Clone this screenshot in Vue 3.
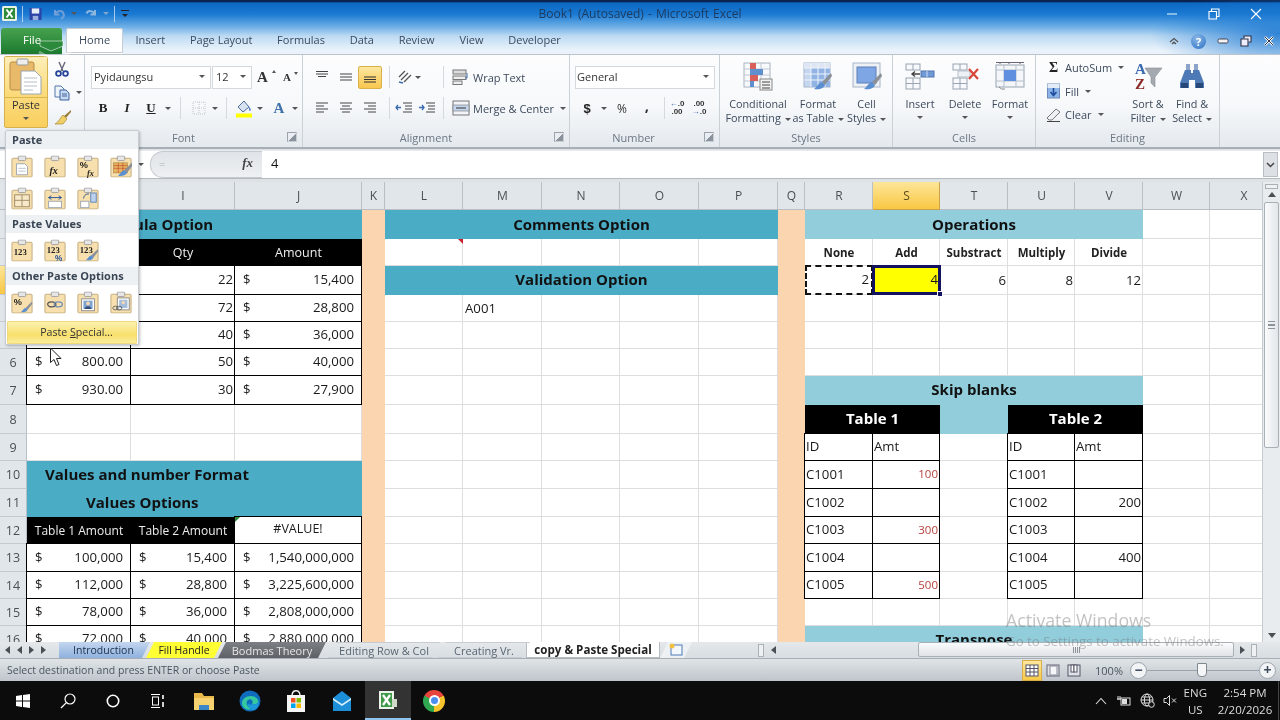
<template>
  <div class="app">
    <svg class="defs" width="0" height="0">
      <defs>
        <symbol id="clip" viewBox="0 0 24 24">
          <rect x="1" y="3" width="22" height="20.5" rx="1" fill="#f7dfae" stroke="#c0a878"/>
          <rect x="8" y="0.5" width="8" height="5" rx="1" fill="#e6e6e6" stroke="#a0a0a0"/>
        </symbol>
        <symbol id="brush" viewBox="0 0 24 24">
          <path d="M22 6 L13 15 L16 18 L23 9Z" fill="#8a8f98"/>
          <path d="M13 15 C9 16 8 20 5 22 C11 23 15 21 16 18Z" fill="#5b8fd0"/>
        </symbol>
      </defs>
    </svg>

    <!-- title area -->
    <header class="top">
      <div class="titlerow">
        <div class="qat">
          <svg class="xl" width="15" height="15" viewBox="0 0 15 15"><rect width="15" height="15" rx="1.5" fill="#e8f2e4"/><rect x="2" y="2" width="11" height="11" fill="#2f8a3c"/><path d="M4.5 3.5 L10.5 11.5 M10.5 3.5 L4.5 11.5" stroke="#fff" stroke-width="2"/></svg>
          <i class="qsep"></i>
          <svg width="13" height="14" viewBox="0 0 14 14"><rect x="0.5" y="0.5" width="13" height="13" rx="1" fill="#2c43a8"/><rect x="3" y="1" width="8" height="5.5" fill="#e8eef8"/><rect x="4" y="9" width="6" height="4.5" fill="#9db0dc"/></svg>
          <svg class="ml10" width="14" height="14" viewBox="0 0 14 14"><path d="M3 3 V7.5 H7.5 M3.5 7 C5 3.5 10 3 11.5 6.5 C12.5 9 11 11 9 12" fill="none" stroke="#6f9fd6" stroke-width="2"/></svg>
          <i class="caret d ml5"></i>
          <svg class="ml7" width="14" height="14" viewBox="0 0 14 14"><path d="M11 3 V7.5 H6.5 M10.5 7 C9 3.5 4 3 2.5 6.5" fill="none" stroke="#8fb6dd" stroke-width="2"/></svg>
          <i class="caret g2 ml5"></i>
          <i class="qsep ml3"></i>
          <span class="cust"></span>
        </div>
        <div class="wtitle">Book1 (Autosaved)&nbsp;-&nbsp;Microsoft Excel</div>
        <div class="wctl">
          <svg width="14" height="14" viewBox="0 0 14 14"><path d="M2 7 H12" stroke="#cfe4f7" stroke-width="1.2"/></svg>
          <svg width="14" height="14" viewBox="0 0 14 14"><path d="M4.5 4.5 V2 H12 V9.5 H9.5 M2 4.5 H9.5 V12 H2Z" fill="none" stroke="#fff" stroke-width="1.1"/></svg>
          <svg width="14" height="14" viewBox="0 0 14 14"><path d="M2 2 L12 12 M12 2 L2 12" stroke="#fff" stroke-width="1.1"/></svg>
        </div>
      </div>
      <div class="tabrow">
        <div class="file">File</div>
        <div class="tab on">Home</div>
        <div class="tab">Insert</div>
        <div class="tab">Page Layout</div>
        <div class="tab">Formulas</div>
        <div class="tab">Data</div>
        <div class="tab">Review</div>
        <div class="tab">View</div>
        <div class="tab">Developer</div>
        <div class="minctl">
          <svg width="12" height="10" viewBox="0 0 12 10"><path d="M2 6 L6 2.5 L10 6 M4 8 L6 6.2 L8 8" fill="none" stroke="#555" stroke-width="1.3"/></svg>
          <span class="help">?</span>
          <svg width="12" height="12" viewBox="0 0 12 12"><rect x="1" y="4" width="10" height="4" rx="1.5" fill="#f2f2f2" stroke="#445"/></svg>
          <svg width="12" height="12" viewBox="0 0 12 12"><path d="M4 3 V1 H11 V7 H9 M1 4 H8 V11 H1Z" fill="#eef" stroke="#334" stroke-width="1.1"/></svg>
          <svg width="12" height="12" viewBox="0 0 12 12"><path d="M2 2 L10 10 M10 2 L2 10" stroke="#fff" stroke-width="2.4"/><path d="M2 2 L10 10 M10 2 L2 10" stroke="#334" stroke-width="1"/></svg>
        </div>
      </div>
    </header>

    <!-- ribbon -->
    <section class="ribbon">
      <div class="grp g-clip">
        <div class="body clipbody">
          <div class="pastebtn">
            <div class="ptop">
              <svg width="34" height="38" viewBox="0 0 34 38"><rect x="1" y="4" width="24" height="28" rx="2" fill="#e8b968" stroke="#b88d48"/><rect x="8" y="1" width="11" height="6" rx="1" fill="#eee" stroke="#999"/><path d="M12 13 H26 L32 19 V36 H12Z" fill="#fff" stroke="#9aa4b0"/><path d="M15 20 H28 M15 24 H28 M15 28 H28 M15 32 H24" stroke="#b7bfc8"/></svg>
            </div>
            <div class="pbot"><span>Paste</span><i class="caret d"></i></div>
          </div>
          <div class="smallcol">
            <div class="sm"><svg width="16" height="16" viewBox="0 0 16 16"><path d="M5 1 L9 10 M11 1 L7 10" stroke="#667" stroke-width="1.4"/><circle cx="4.5" cy="12.5" r="2.4" fill="none" stroke="#25459a" stroke-width="1.8"/><circle cx="11.5" cy="12.5" r="2.4" fill="none" stroke="#25459a" stroke-width="1.8"/></svg></div>
            <div class="sm"><svg width="16" height="16" viewBox="0 0 16 16"><path d="M1 1 H7 L10 4 V12 H1Z" fill="#eef3fa" stroke="#5577aa"/><path d="M6 5 H12 L15 8 V15 H6Z" fill="#c7d9f0" stroke="#3d63a0"/><path d="M8 9 H13 M8 11 H13" stroke="#3d63a0"/></svg><i class="caret d ml6"></i></div>
            <div class="sm"><svg width="18" height="16" viewBox="0 0 18 16"><path d="M17 1 L10 7 L12 9 L17 3Z" fill="#9c7f3a"/><path d="M9 6 L13 10 L9 15 H1 C5 13 6 9 9 6Z" fill="#f0cf68" stroke="#a88a30" stroke-width=".7"/></svg></div>
          </div>
        </div>
        <div class="lbl">Clipboard</div>
      </div>

      <div class="grp g-font">
        <div class="body col">
          <div class="rrow">
            <div class="combo w120"><span>Pyidaungsu</span><i class="caret d"></i></div>
            <div class="combo w40"><span>12</span><i class="caret d"></i></div>
            <span class="bigA ml5">A<i class="mini up"></i></span>
            <span class="smA">A<i class="mini dn"></i></span>
          </div>
          <div class="rrow">
            <span class="ic i24 fb">B</span>
            <span class="ic i24 fi">I</span>
            <span class="ic i24 fu">U</span>
            <span class="cw"><i class="caret d"></i></span>
            <i class="vsep m7"></i>
            <span class="ic i22"><svg width="14" height="14" viewBox="0 0 14 14"><rect x="1" y="1" width="12" height="12" fill="none" stroke="#c2c7cd" stroke-dasharray="1 1"/><path d="M7 1 V13 M1 7 H13" stroke="#c2c7cd" stroke-dasharray="1 1"/></svg></span>
            <span class="cw"><i class="caret d"></i></span>
            <i class="vsep m6"></i>
            <span class="ic i22"><svg width="18" height="20" viewBox="0 0 18 20"><path d="M3 9 L9 3 L14 9 L8 14Z" fill="#d8e3f2" stroke="#4e6c97"/><path d="M14 9 C16 10 16 13 15 13 C14 13 14 11 14 9Z" fill="#4277bf"/><rect x="1" y="15.5" width="16" height="4" fill="#ffff00"/></svg></span>
            <span class="cw"><i class="caret d"></i></span>
            <span class="ic i22 ml3 colorA">A</span>
            <span class="cw"><i class="caret d"></i></span>
          </div>
        </div>
        <div class="lbl off20">Font<i class="launch"></i></div>
      </div>

      <div class="grp g-align">
        <div class="body col">
          <div class="rrow">
            <span class="ic i24"><svg width="16" height="14" viewBox="0 0 16 14"><path d="M2 1.5 H14 M2 4 H14 M4 6.5 H12" stroke="#444" stroke-width="1.2"/></svg></span>
            <span class="ic i24"><svg width="16" height="14" viewBox="0 0 16 14"><path d="M2 4 H14 M2 7 H14 M2 10 H14" stroke="#444" stroke-width="1.2"/></svg></span>
            <span class="ic i24 hot"><svg width="16" height="14" viewBox="0 0 16 14"><path d="M2 7 H14 M2 9.5 H14 M2 12 H14" stroke="#333" stroke-width="1.2"/></svg></span>
            <i class="vsep m7"></i>
            <span class="ic i16"><svg width="16" height="16" viewBox="0 0 16 16"><path d="M2 8 L8 2 M4 11 L11 4 M7 13 L14 6" stroke="#555" stroke-width="1.3"/><path d="M2 13 L6 14" stroke="#3a6bb0" stroke-width="1.5"/></svg></span>
            <span class="cw"><i class="caret d"></i></span>
            <i class="vsep m20"></i>
            <svg class="ml8" width="18" height="16" viewBox="0 0 18 16"><rect x="1" y="1" width="13" height="4" fill="#ddd" stroke="#777"/><rect x="1" y="7" width="13" height="3.5" fill="#eee" stroke="#777"/><rect x="1" y="12" width="9" height="3.5" fill="#eee" stroke="#777"/><path d="M15 4 V9 H13" fill="none" stroke="#3a6bb0"/></svg>
            <span class="alabel">Wrap Text</span>
          </div>
          <div class="rrow">
            <span class="ic i24"><svg width="16" height="14" viewBox="0 0 16 14"><path d="M2 2 H14 M2 5 H10 M2 8 H14 M2 11 H10" stroke="#444" stroke-width="1.2"/></svg></span>
            <span class="ic i24"><svg width="16" height="14" viewBox="0 0 16 14"><path d="M2 2 H14 M4 5 H12 M2 8 H14 M4 11 H12" stroke="#444" stroke-width="1.2"/></svg></span>
            <span class="ic i24"><svg width="16" height="14" viewBox="0 0 16 14"><path d="M2 2 H14 M6 5 H14 M2 8 H14 M6 11 H14" stroke="#444" stroke-width="1.2"/></svg></span>
            <i class="vsep m4"></i>
            <span class="ic i22"><svg width="18" height="14" viewBox="0 0 18 14"><path d="M8 2 H17 M10 5 H17 M10 8 H17 M8 11 H17" stroke="#444"/><path d="M1 6.5 H6 M3 4 L1 6.5 L3 9" fill="none" stroke="#3a6bb0" stroke-width="1.3"/></svg></span>
            <span class="ic i22 ml1"><svg width="18" height="14" viewBox="0 0 18 14"><path d="M8 2 H17 M10 5 H17 M10 8 H17 M8 11 H17" stroke="#444"/><path d="M1 6.5 H6 M4 4 L6 6.5 L4 9" fill="none" stroke="#3a6bb0" stroke-width="1.3"/></svg></span>
            <i class="vsep m5"></i>
            <svg class="ml8" width="18" height="16" viewBox="0 0 18 16"><rect x="1" y="1" width="16" height="14" fill="#f2f4f7" stroke="#777"/><rect x="1" y="5" width="16" height="6" fill="#c3d5ec" stroke="#777" stroke-width=".6"/><path d="M4 8 H14" stroke="#333"/></svg>
            <span class="alabel">Merge &amp; Center</span>
            <i class="caret d ml6"></i>
          </div>
        </div>
        <div class="lbl off20">Alignment<i class="launch"></i></div>
      </div>

      <div class="grp g-num">
        <div class="body col">
          <div class="rrow">
            <div class="combo w140"><span>General</span><i class="caret d"></i></div>
          </div>
          <div class="rrow">
            <span class="ic i24 fdollar">$</span>
            <span class="cw"><i class="caret d"></i></span>
            <span class="ic i24 ml1 fpct">%</span>
            <span class="ic i24 ml1 fcomma">,</span>
            <i class="vsep m5"></i>
            <span class="ic i22 ml1 fdec"><b class="bluearrow">←</b>.0<br/>.00</span>
            <span class="ic i22 fdec">.00<br/><b class="bluearrow">→</b>.0</span>
          </div>
        </div>
        <div class="lbl off22">Number<i class="launch"></i></div>
      </div>

      <div class="grp g-styles">
        <div class="body">
          <div class="big b76">
            <svg width="30" height="30" viewBox="0 0 30 30"><rect x="1" y="2" width="26" height="24" fill="#f7f9fc" stroke="#aab4c0"/><path d="M1 8 H27 M1 14 H27 M1 20 H27 M9 2 V26 M18 2 V26" stroke="#c0c8d2"/><rect x="7" y="2" width="6" height="6" fill="#d9605a"/><rect x="7" y="8" width="13" height="6" fill="#5f8fcf"/><rect x="7" y="14" width="8" height="6" fill="#d9605a"/><rect x="7" y="20" width="4" height="6" fill="#5f8fcf"/><rect x="17" y="18" width="12" height="11" fill="#f2f2f2" stroke="#888"/><path d="M19 21 H27 M19 24 H27 M19 27 H27" stroke="#444"/></svg>
            <span>Conditional</span><span>Formatting <i class="caret d"></i></span>
          </div>
          <div class="big b42">
            <svg width="30" height="30" viewBox="0 0 30 30"><rect x="1" y="2" width="26" height="24" fill="#c5d7f0" stroke="#a6b5c8"/><rect x="1" y="2" width="26" height="5" fill="#dde6f2"/><rect x="8" y="7" width="19" height="19" fill="#92b4e4"/><path d="M1 7 H27 M1 13 H27 M1 19 H27 M8 2 V26 M15 2 V26 M22 2 V26" stroke="#eef3fa"/><use href="#brush" x="6" y="6" width="24" height="24"/></svg>
            <span>Format</span><span>as Table <i class="caret d"></i></span>
          </div>
          <div class="big b53">
            <svg width="30" height="30" viewBox="0 0 30 30"><rect x="1" y="2" width="27" height="24" fill="#edf1f6" stroke="#a6b5c8"/><rect x="5" y="6" width="19" height="16" fill="#7ea6e4" stroke="#5f7fb8"/><use href="#brush" x="7" y="6" width="24" height="24"/></svg>
            <span>Cell</span><span>Styles <i class="caret d"></i></span>
          </div>
        </div>
        <div class="lbl">Styles</div>
      </div>

      <div class="grp g-cells">
        <div class="body">
          <div class="big b54">
            <svg width="30" height="30" viewBox="0 0 30 30"><rect x="1" y="3" width="14" height="6" fill="#f7f9fc" stroke="#9aa4b0"/><path d="M8 3 V9" stroke="#9aa4b0"/><rect x="1" y="17" width="14" height="11" fill="#f7f9fc" stroke="#9aa4b0"/><path d="M8 17 V28 M1 22.5 H15" stroke="#9aa4b0"/><rect x="16" y="10" width="13" height="6" fill="#6f9ad6" stroke="#4f74b0"/><path d="M22 10 V16" stroke="#cfe0f5"/><path d="M7 13 H15 M10 10.5 L7 13 L10 15.5" fill="none" stroke="#444" stroke-width="1.4"/></svg>
            <span>Insert</span><i class="caret d mt5"></i>
          </div>
          <div class="big b36">
            <svg width="30" height="30" viewBox="0 0 30 30"><rect x="3" y="3" width="14" height="6" fill="#f7f9fc" stroke="#9aa4b0"/><path d="M10 3 V9" stroke="#9aa4b0"/><rect x="3" y="17" width="14" height="11" fill="#f7f9fc" stroke="#9aa4b0"/><path d="M10 17 V28 M3 22.5 H17" stroke="#9aa4b0"/><rect x="8" y="10" width="12" height="6" fill="#eef2f7" stroke="#b5bfcc"/><path d="M19 8 L28 18 M28 8 L19 18" stroke="#d9463a" stroke-width="2.2"/></svg>
            <span>Delete</span><i class="caret d mt5"></i>
          </div>
          <div class="big b54">
            <svg width="30" height="30" viewBox="0 0 30 30"><path d="M1 1.5 H29 M5 1 V3 M14 1 V3 M25 1 V3" stroke="#667"/><rect x="1" y="4" width="28" height="22" fill="#f4f6f9" stroke="#9aa4b0"/><path d="M1 9 H29 M1 20 H29 M9 4 V26 M21 4 V26" stroke="#b5bfcc"/><rect x="9" y="9" width="12" height="11" fill="#5f8fde"/><path d="M4 26 Q6 29 10 28" fill="none" stroke="#888"/></svg>
            <span>Format</span><i class="caret d mt5"></i>
          </div>
        </div>
        <div class="lbl">Cells</div>
      </div>

      <div class="grp g-edit">
        <div class="body">
          <div class="editcol">
            <div class="erow"><span class="sigma">Σ</span><span>AutoSum</span><i class="caret d ml6"></i></div>
            <div class="erow"><svg class="eicon" width="14" height="16" viewBox="0 0 14 16"><rect x="1" y="1" width="12" height="14" fill="#8cb3e8" stroke="#6d8ab5"/><rect x="1" y="1" width="12" height="4" fill="#e3ebf6"/><path d="M7 5 V12 M4 9 L7 12.5 L10 9" fill="none" stroke="#1d4c9c" stroke-width="1.6"/></svg><span>Fill</span><i class="caret d ml6"></i></div>
            <div class="erow"><svg class="eicon" width="15" height="14" viewBox="0 0 15 14"><path d="M10 1 L14 4 L6 12 H3 L1 10Z" fill="#eef1f4" stroke="#777"/><path d="M1 13.5 H14" stroke="#444"/></svg><span>Clear</span><i class="caret d ml6"></i></div>
          </div>
          <div class="big b44">
            <svg width="30" height="30" viewBox="0 0 30 30"><text x="2" y="13" class="az blue2">A</text><text x="2" y="28" class="az red2">Z</text><path d="M12 7 H29 L22 16 V26 L18 22 V16Z" fill="#a5aab0" stroke="#8a8f96" stroke-width=".6"/></svg>
            <span>Sort &amp;</span><span>Filter <i class="caret d"></i></span>
          </div>
          <div class="big b44">
            <svg width="30" height="30" viewBox="0 0 30 30"><rect x="9" y="3" width="4" height="7" fill="#8aa5c9"/><rect x="17" y="3" width="4" height="7" fill="#8aa5c9"/><path d="M8 9 H14 V12 H16 V9 H22 L27 22 V27 H18 V19 H12 V27 H3 V22Z" fill="#4d7ab5"/><rect x="4" y="22" width="7" height="5" fill="#29487a"/><rect x="19" y="22" width="7" height="5" fill="#29487a"/></svg>
            <span>Find &amp;</span><span>Select <i class="caret d"></i></span>
          </div>
        </div>
        <div class="lbl">Editing</div>
      </div>
    </section>
    <div class="ribline"></div>

    <!-- formula bar -->
    <div class="fbar">
      <div class="namebox"><i class="caret d"></i></div>
      <div class="pill"><span class="eq">=</span><span class="fx">fx</span></div>
      <div class="finput">4</div>
      <div class="fexp"><svg width="9" height="6" viewBox="0 0 9 6"><path d="M1 1 L4.5 4.5 L8 1" fill="none" stroke="#444" stroke-width="1.5"/></svg></div>
    </div>

    <!-- sheet -->
    <div class="sheetwrap">
      <div class="grid">
        <div class="corner"></div>
        <div v-for="(c, i) in colNames" :key="c" class="ch" :class="{ active: c === 'S' }" :style="{ gridColumn: i + 2, gridRow: 1 }">{{ c }}</div>
        <div v-for="r in 16" :key="'r' + r" class="rh" :class="{ active: r === 3 }" :style="{ gridColumn: 1, gridRow: r + 1 }">{{ r }}</div>
        <template v-for="r in 16" :key="'row' + r">
          <div v-for="(c, i) in colNames" :key="c + r" class="g" :style="{ gridColumn: i + 2, gridRow: r + 1 }"></div>
        </template>
        <div v-for="(x, i) in cells" :key="i" class="cell" :class="x.cls" :style="{ gridColumn: x.col + ' / span ' + x.span, gridRow: x.row }">
          <template v-if="x.money"><span>$</span><span>{{ x.money }}</span></template>
          <template v-else>{{ x.text }}</template>
        </div>
      </div>
      <div class="vscroll">
        <div class="vsplit"></div>
        <i class="arrow up"></i>
        <div class="vtrack"><div class="vthumb"><span class="grip"></span></div></div>
        <i class="arrow down"></i>
      </div>
    </div>

    <!-- sheet tabs -->
    <div class="sheetbar">
      <div class="nav">
        <i class="tri l bar"></i><i class="tri l"></i><i class="tri r"></i><i class="tri r bar"></i>
      </div>
      <div class="stabs">
        <div class="st tblue">Introduction</div>
        <div class="st yellow">Fill Handle</div>
        <div class="st dark">Bodmas Theory</div>
        <div class="st plain">Editing Row &amp; Col</div>
        <div class="st plain">Creating Vr.</div>
        <div class="st act">copy &amp; Paste Special</div>
        <div class="st newt"><svg width="16" height="14" viewBox="0 0 16 14"><rect x="3" y="2" width="11" height="10" fill="#f4f7fb" stroke="#4a7ab8"/><circle cx="4" cy="3" r="2.5" fill="#f0c040"/></svg></div>
      </div>
      <div class="hsplit"></div>
      <i class="tri l hl"></i>
      <div class="htrack"><div class="hthumb"><span class="hgrip"></span></div></div>
      <i class="tri r"></i>
      <div class="hsplit last"></div>
    </div>

    <!-- status bar -->
    <footer class="status">
      <span class="stxt">Select destination and press ENTER or choose Paste</span>
      <div class="sright">
        <span class="vw on"><svg width="14" height="13" viewBox="0 0 14 13"><rect x="1" y="1" width="12" height="11" fill="#fff" stroke="#556"/><path d="M1 4.5 H13 M1 8 H13 M5 1 V12 M9 1 V12" stroke="#556"/></svg></span>
        <span class="vw"><svg width="14" height="13" viewBox="0 0 14 13"><rect x="1" y="1" width="12" height="11" fill="#dfe3e7" stroke="#667"/><rect x="4" y="2" width="7" height="9" fill="#f5f6f7" stroke="#889"/></svg></span>
        <span class="vw"><svg width="14" height="13" viewBox="0 0 14 13"><rect x="1" y="1" width="12" height="11" fill="#dfe3e7" stroke="#556"/><rect x="4" y="1" width="3" height="7" fill="#fff" stroke="#556"/><rect x="7" y="1" width="3" height="7" fill="#fff" stroke="#556"/></svg></span>
        <span class="pct">100%</span>
        <span class="zbtn">−</span>
        <div class="slider"><i class="sthumb"></i></div>
        <span class="zbtn">+</span>
      </div>
    </footer>

    <!-- taskbar -->
    <footer class="taskbar">
      <div class="ti t45"><svg width="16" height="16" viewBox="0 0 16 16"><path d="M1 3 L7 2 V7.5 H1Z M8 2 L15 1 V7.5 H8Z M1 8.5 H7 V14 L1 13Z M8 8.5 H15 V15 L8 14Z" fill="#fff"/></svg></div>
      <div class="ti t45"><svg width="16" height="16" viewBox="0 0 16 16"><circle cx="10" cy="6" r="5" fill="none" stroke="#fff" stroke-width="1.2"/><path d="M6.4 9.6 L1 15" stroke="#fff" stroke-width="1.3"/></svg></div>
      <div class="ti t45"><svg width="14" height="14" viewBox="0 0 14 14"><circle cx="7" cy="7" r="5.7" fill="none" stroke="#fff" stroke-width="1.6"/></svg></div>
      <div class="ti t45"><svg width="16" height="16" viewBox="0 0 16 16"><path d="M1 1.5 H10 M1 14.5 H10" stroke="#fff"/><rect x="2.5" y="4" width="6" height="8" fill="none" stroke="#fff"/><path d="M13 2 V6 M13 9 V14" stroke="#fff" stroke-width="1.6"/></svg></div>
      <div class="ti t46 first"><svg width="22" height="20" viewBox="0 0 22 20"><path d="M1 2 H9 L11 5 H21 V19 H1Z" fill="#e9b84a"/><rect x="1" y="7" width="20" height="12" fill="#f5d16f"/><rect x="6" y="14" width="10" height="5" fill="#3a86c8"/></svg></div>
      <div class="ti t46"><svg width="22" height="22" viewBox="0 0 22 22"><circle cx="11" cy="11" r="10.5" fill="#0f6cbd"/><path d="M3 13 C3 6 15 3 19 10 C20 13 17 15 13 14 C15 11 12 8 9 10 C6 12 8 18 13 19 C8 21 3 18 3 13Z" fill="#36c9a0"/><path d="M13 14 C17 15 20 13 19 10 C21 14 19 18 15 20 C11 20 8 17 9 13 C10 15 11 15 13 14Z" fill="#1d9bd8"/></svg></div>
      <div class="ti t46"><svg width="20" height="24" viewBox="0 0 20 24"><path d="M6 7 C6 0 14 0 14 7" fill="none" stroke="#eee" stroke-width="1.4"/><rect x="1" y="6" width="18" height="17" fill="#f5f5f5"/><rect x="5" y="9" width="4.5" height="4.5" fill="#f25022"/><rect x="10.5" y="9" width="4.5" height="4.5" fill="#7fba00"/><rect x="5" y="14.5" width="4.5" height="4.5" fill="#00a4ef"/><rect x="10.5" y="14.5" width="4.5" height="4.5" fill="#ffb900"/></svg></div>
      <div class="ti t46"><svg width="20" height="22" viewBox="0 0 20 22"><path d="M1 8 L10 1 L19 8 V21 H1Z" fill="#1d8fd8"/><path d="M1 8 L10 14 L19 8 V10 L10 16 L1 10Z" fill="#d8effc"/></svg></div>
      <div class="ti t46 activeapp"><svg width="20" height="20" viewBox="0 0 20 20"><rect x="1" y="1" width="15" height="18" fill="#eef5ea"/><rect x="3" y="3" width="11" height="14" fill="#3f9b4a"/><path d="M5 5 L12 15 M12 5 L5 15" stroke="#fff" stroke-width="2.2"/><rect x="14" y="9" width="5" height="8" fill="#cfd8c9"/></svg></div>
      <div class="ti t46"><span class="chrome"><i></i></span></div>
      <div class="tray">
        <svg width="12" height="8" viewBox="0 0 12 8"><path d="M1 7 L6 1.5 L11 7" fill="none" stroke="#ddd" stroke-width="1.1"/></svg>
        <svg class="ml10" width="14" height="12" viewBox="0 0 14 12"><rect x="4" y="3" width="9" height="7" fill="none" stroke="#ddd"/><rect x="5" y="4" width="5" height="5" fill="#ddd"/><path d="M1 1 V5 M3 1 V5 M0 4 H4" stroke="#ddd"/></svg>
        <svg class="ml9" width="15" height="15" viewBox="0 0 15 15"><circle cx="7" cy="7" r="6" fill="none" stroke="#ddd"/><ellipse cx="7" cy="7" rx="2.6" ry="6" fill="none" stroke="#ddd"/><path d="M1 7 H13 M2 4 H12 M2 10 H12" stroke="#ddd"/><circle cx="11.5" cy="11.5" r="2.8" fill="#111" stroke="#ddd"/></svg>
        <svg class="ml8" width="14" height="13" viewBox="0 0 14 13"><path d="M1 4.5 H3.5 L6.5 1.5 V11.5 L3.5 8.5 H1Z" fill="none" stroke="#ddd"/><path d="M9 4.5 L13 8.5 M13 4.5 L9 8.5" stroke="#ddd"/></svg>
        <div class="lang"><span>ENG</span><span>US</span></div>
        <div class="clock"><span>2:54 PM</span><span>2/20/2026</span></div>
        <i class="showd"></i>
      </div>
    </footer>

    <!-- paste gallery menu -->
    <div class="menu">
      <div class="mh">Paste</div>
      <div class="irow">
        <svg class="pi" viewBox="0 0 24 24"><use href="#clip"/><path d="M6 9 H15 L18 12 V21 H6Z" fill="#fff" stroke="#9aa4b0"/><path d="M8 14 H16 M8 17 H16" stroke="#b7bfc8"/></svg>
        <svg class="pi" viewBox="0 0 24 24"><use href="#clip"/><text x="6" y="20" class="pfx">fx</text></svg>
        <svg class="pi" viewBox="0 0 24 24"><use href="#clip"/><text x="3" y="14" class="ppct">%</text><text x="11" y="22" class="pfx s">fx</text></svg>
        <svg class="pi" viewBox="0 0 24 24"><use href="#clip"/><rect x="4" y="8" width="15" height="11" fill="#e5b25e" stroke="#9d7a3a" stroke-width=".6"/><path d="M4 11 H19 M4 14 H19 M9 8 V19 M14 8 V19" stroke="#c0392b" stroke-width=".6"/><use href="#brush" x="4" y="2" width="22" height="22"/></svg>
      </div>
      <div class="irow r2">
        <svg class="pi" viewBox="0 0 24 24"><use href="#clip"/><rect x="4" y="8" width="16" height="13" fill="#f8e9c9" stroke="#9d8a66"/><path d="M12 8 V21 M4 14 H20" stroke="#9d8a66"/></svg>
        <svg class="pi" viewBox="0 0 24 24"><use href="#clip"/><path d="M5 11 H19 M5 11 L8 9 M5 11 L8 13 M19 11 L16 9 M19 11 L16 13" fill="none" stroke="#1f4f99" stroke-width="1"/><rect x="5" y="15" width="14" height="7" fill="#fff" stroke="#9aa4b0"/></svg>
        <svg class="pi" viewBox="0 0 24 24"><use href="#clip"/><rect x="4" y="15" width="9" height="7" fill="#fff" stroke="#9aa4b0"/><rect x="15" y="6" width="6" height="10" fill="#bcd2ee" stroke="#5d83b8"/><path d="M7 12 C8 8 10 7 13 7" fill="none" stroke="#1f4f99"/></svg>
      </div>
      <div class="mh h2">Paste Values</div>
      <div class="irow r3">
        <svg class="pi" viewBox="0 0 24 24"><use href="#clip"/><text x="3" y="17" class="p123">123</text></svg>
        <svg class="pi" viewBox="0 0 24 24"><use href="#clip"/><text x="3" y="15" class="p123">123</text><text x="12" y="23" class="ppct s">%</text></svg>
        <svg class="pi" viewBox="0 0 24 24"><use href="#clip"/><text x="3" y="15" class="p123">123</text><use href="#brush" x="6" y="6" width="18" height="18"/></svg>
      </div>
      <div class="mh h3">Other Paste Options</div>
      <div class="irow r4">
        <svg class="pi" viewBox="0 0 24 24"><use href="#clip"/><text x="3" y="15" class="ppct">%</text><use href="#brush" x="7" y="7" width="17" height="17"/></svg>
        <svg class="pi" viewBox="0 0 24 24"><use href="#clip"/><ellipse cx="8.5" cy="14" rx="4.5" ry="2.8" fill="none" stroke="#555" stroke-width="1.4"/><ellipse cx="15.5" cy="14" rx="4.5" ry="2.8" fill="none" stroke="#6f8fb5" stroke-width="1.4"/></svg>
        <svg class="pi" viewBox="0 0 24 24"><use href="#clip"/><rect x="5" y="8" width="14" height="13" fill="#fff" stroke="#888"/><rect x="7" y="10" width="10" height="9" fill="#7ea3cf"/><circle cx="12" cy="13" r="2" fill="#f4d7b5"/><path d="M8 19 C9 15 15 15 16 19Z" fill="#344e78"/></svg>
        <svg class="pi" viewBox="0 0 24 24"><use href="#clip"/><rect x="8" y="7" width="13" height="13" fill="#fff" stroke="#888"/><rect x="10" y="9" width="9" height="9" fill="#a4bddb"/><circle cx="14.5" cy="12" r="1.8" fill="#f4d7b5"/><ellipse cx="6" cy="18" rx="3" ry="2" fill="none" stroke="#666"/><ellipse cx="10" cy="18" rx="3" ry="2" fill="none" stroke="#666"/></svg>
      </div>
      <div class="pspecial"><span>Paste <u>S</u>pecial...</span></div>
    </div>

    <!-- faint chevron that sits over the File tab in the recording -->
    <svg class="ghost" width="46" height="28" viewBox="0 0 46 28">
      <path d="M3 3 H26 V8 L14 13 L3 8Z" fill="#2c8a3c" stroke="rgba(255,255,255,.55)"/>
      <path d="M2 14 L16 22 L34 14" fill="none" stroke="rgba(255,255,255,.35)" stroke-width="3"/>
    </svg>

    <!-- desktop watermark -->
    <div class="wm">
      <div class="wm1">Activate Windows</div>
      <div class="wm2">Go to Settings to activate Windows.</div>
    </div>

    <!-- pointer -->
    <svg class="cursor" width="14" height="20" viewBox="0 0 14 20"><path d="M1.5 1 V15.5 L5 12.5 L7.5 18.5 L10 17.5 L7.5 11.5 H12Z" fill="#fff" stroke="#222" stroke-width="1"/></svg>
  </div>
</template>

<script setup>
const colNames = 'H I J K L M N O P Q R S T U V W X'.split(' ')
const idx = (c) => colNames.indexOf(c) + 2
const cells = []
const add = (c, row, o = {}) => cells.push({ col: idx(c), row: row + 1, span: o.span || 1, cls: o.cls || '', text: o.text || '', money: o.money || '' })

// spacer columns
for (let r = 1; r <= 16; r++) {
  add('K', r, { cls: 'orange' })
  add('Q', r, { cls: 'orange' })
}

// left block
add('H', 1, { span: 3, cls: 'teal title pad68', text: 'Formula Option' })
add('H', 2, { cls: 'black hdr' })
add('I', 2, { cls: 'black hdr', text: 'Qty' })
add('J', 2, { cls: 'black hdr', text: 'Amount' })
const rows = [[3, '', '22', '15,400'], [4, '', '72', '28,800'], [5, '', '40', '36,000'], [6, '800.00', '50', '40,000'], [7, '930.00', '30', '27,900']]
for (const [r, h, q, a] of rows) {
  add('H', r, { cls: 'box money', money: h })
  add('I', r, { cls: 'box right', text: q })
  add('J', r, { cls: 'box money', money: a })
}
add('H', 10, { span: 3, cls: 'teal title pad18', text: 'Values and number Format' })
add('H', 11, { span: 3, cls: 'teal title pad59', text: 'Values Options' })
add('H', 12, { cls: 'black hdr small', text: 'Table 1 Amount' })
add('I', 12, { cls: 'black hdr small', text: 'Table 2 Amount' })
add('J', 12, { cls: 'box center raised err', text: '#VALUE!' })
const vals = [[13, '100,000', '15,400', '1,540,000,000'], [14, '112,000', '28,800', '3,225,600,000'], [15, '78,000', '36,000', '2,808,000,000'], [16, '72,000', '40,000', '2,880,000,000']]
for (const [r, a, b, c] of vals) {
  add('H', r, { cls: 'box money', money: a })
  add('I', r, { cls: 'box money', money: b })
  add('J', r, { cls: 'box money', money: c })
}

// middle block
add('L', 1, { span: 5, cls: 'teal title center', text: 'Comments Option' })
add('L', 2, { cls: 'plain comment' })
add('L', 3, { span: 5, cls: 'teal title center up', text: 'Validation Option' })
add('M', 4, { cls: 'plain left', text: 'A001' })

// operations
add('R', 1, { span: 5, cls: 'sky title center', text: 'Operations' })
;['None', 'Add', 'Substract', 'Multiply', 'Divide'].forEach((t, i) => add('RSTUV'[i], 2, { cls: 'plain opshdr', text: t }))
add('R', 3, { cls: 'plain right marching', text: '2' })
add('S', 3, { cls: 'right selected', text: '4' })
add('T', 3, { cls: 'plain right', text: '6' })
add('U', 3, { cls: 'plain right', text: '8' })
add('V', 3, { cls: 'plain right', text: '12' })

// skip blanks
add('R', 7, { span: 5, cls: 'sky title center up', text: 'Skip blanks' })
add('R', 8, { span: 2, cls: 'black title center up', text: 'Table 1' })
add('T', 8, { cls: 'sky' })
add('U', 8, { span: 2, cls: 'black title center up', text: 'Table 2' })
const ids = ['ID', 'C1001', 'C1002', 'C1003', 'C1004', 'C1005']
const t1 = ['Amt', '100', '', '300', '', '500']
const t2 = ['Amt', '', '200', '', '400', '']
ids.forEach((id, i) => {
  const r = 9 + i
  add('R', r, { cls: 'box left', text: id })
  add('S', r, { cls: i === 0 ? 'box left' : 'box right red', text: t1[i] })
  add('U', r, { cls: 'box left', text: id })
  add('V', r, { cls: i === 0 ? 'box left' : 'box right', text: t2[i] })
})
add('R', 16, { span: 5, cls: 'sky title center', text: 'Transpose' })
</script>

<style>
html, body { margin: 0; overflow: hidden; background: #000; }
</style>

<style scoped>
.app { position: relative; width: 1280px; height: 720px; overflow: hidden; display: flex; flex-direction: column; font-family: "Open Sans", "Noto Sans", sans-serif; font-size: 11px; color: #3d4a5c; background: #fff; filter: blur(.3px); }
.defs { position: absolute; }
.ml1 { margin-left: 1px; } .ml3 { margin-left: 3px; } .ml5 { margin-left: 5px; } .ml6 { margin-left: 6px; } .ml7 { margin-left: 7px; } .ml8 { margin-left: 8px; } .ml9 { margin-left: 9px; } .ml10 { margin-left: 10px; } .ml11 { margin-left: 11px; } .mt5 { margin-top: 5px; }

.caret { display: inline-block; width: 0; height: 0; border-left: 3px solid transparent; border-right: 3px solid transparent; border-top: 3px solid #555; vertical-align: middle; flex: none; }
.caret.g2 { border-top-color: #7fa6cc; }

/* top */
.top { height: 54px; flex: none; box-sizing: border-box; background:
  radial-gradient(ellipse 130px 42px at 100% 62%, rgba(28,120,210,.85), rgba(28,120,210,0)),
  linear-gradient(180deg, #0a2350 0, #0a2350 1.5px, #0c68c2 3px, #1a79d2 14px, #6fb0e6 27px, #bcdaf3 36px, #eaf3fb 50px); }
.titlerow { height: 27px; display: grid; grid-template-columns: 1fr auto 1fr; align-items: center; }
.qat { display: flex; align-items: center; padding-left: 2px; }
.qsep { width: 1px; height: 16px; background: rgba(255,255,255,.6); margin-left: 5px; margin-right: 6px; }
.cust { width: 8px; height: 7px; border-top: 1px solid #222; position: relative; margin-left: 0; }
.cust::after { content: ""; position: absolute; left: 1px; top: 3px; border-left: 3px solid transparent; border-right: 3px solid transparent; border-top: 3px solid #222; }
.wtitle { font-size: 12px; color: #1e3a5c; word-spacing: 1px; }
.wctl { display: flex; justify-content: flex-end; gap: 28px; padding-right: 17px; }
.tabrow { height: 27px; display: flex; align-items: flex-end; }
.file { width: 61px; height: 26px; margin-left: 1px; margin-right: 4px; border-radius: 3px 3px 0 0; background: linear-gradient(180deg, #47a24f, #1b7a2e); color: #fff; font-size: 11.5px; display: flex; align-items: center; padding: 0 0 3px 22px; box-sizing: border-box; }
.tab { height: 26px; padding: 0 12.4px 3px; display: flex; align-items: center; font-size: 11px; color: #3a4a5e; box-sizing: border-box; }
.tab.on { background: #fff; border-radius: 3px 3px 0 0; box-shadow: 0 0 0 1px #c6ccd2 inset; border-bottom: 1px solid #fff; padding: 0 13px 3px; }
.minctl { margin-left: auto; display: flex; align-items: center; gap: 11px; height: 26px; padding-right: 5px; }
.help { width: 15px; height: 15px; border-radius: 50%; background: radial-gradient(circle at 40% 30%, #8ab8ea, #2a6fc0); color: #fff; font-size: 11px; font-weight: 700; display: flex; align-items: center; justify-content: center; }

/* ribbon */
.ribbon { height: 93px; flex: none; display: flex; background: linear-gradient(180deg, #fdfdfe 0, #f6f8fa 55%, #e4e9ee 100%); border-top: 1px solid #bcc5ce; box-sizing: border-box; }
.grp { display: flex; flex-direction: column; box-sizing: border-box; border-right: 1px solid #c9d0d6; }
.g-clip { width: 85px; } .g-font { width: 218px; } .g-align { width: 267px; } .g-num { width: 150px; } .g-styles { width: 173px; } .g-cells { width: 143px; } .g-edit { width: 184px; }
.body { height: 73px; display: flex; flex: none; box-sizing: border-box; }
.lbl { position: relative; flex: 1; display: flex; align-items: center; justify-content: center; color: #6c7682; font-size: 11px; padding-bottom: 1px; }
.off20 { padding-right: 20px; } .off22 { padding-right: 22px; }
.launch { position: absolute; right: 5px; top: 4px; width: 8px; height: 8px; border: 1px solid #9aa3ac; border-right-color: #c8ced4; border-bottom-color: #c8ced4; background: linear-gradient(135deg, transparent 55%, #8a939c 55%); }
.clipbody { padding: 1px 0 0 4px; gap: 6px; }
.pastebtn { width: 44px; height: 72px; border: 1px solid #d6b24e; border-radius: 2px; box-sizing: border-box; background: linear-gradient(180deg, #fde9a8, #f9cf5e); display: flex; flex-direction: column; }
.ptop { height: 40px; flex: none; display: flex; justify-content: center; align-items: center; border-bottom: 1px solid #dcb851; background: linear-gradient(180deg, #fdeeb8, #fbd976); }
.pbot { flex: 1; display: flex; flex-direction: column; align-items: center; gap: 5px; line-height: 14px; color: #333; }
.smallcol { display: flex; flex-direction: column; padding-top: 4px; gap: 7px; }
.sm { display: flex; align-items: center; height: 17px; }
.col { flex-direction: column; padding-top: 10px; gap: 7px; }
.rrow { display: flex; align-items: center; height: 24px; }
.g-font .col { padding-left: 6px; }
.g-align .col { padding-left: 7px; }
.g-num .col { padding-left: 5px; }
.combo { height: 23px; box-sizing: border-box; border: 1px solid #d4d9de; background: #fff; display: flex; align-items: center; justify-content: space-between; padding: 0 5px 2px 1px; color: #333; font-size: 11px; }
.w120 { width: 120px; padding-left: 2px; } .w40 { width: 40px; margin-left: 1px; padding-left: 3px; } .w140 { width: 140px; }
.bigA, .smA { font-family: "Liberation Serif", serif; font-weight: 700; color: #333; position: relative; display: inline-block; line-height: 1; }
.bigA { font-size: 15px; width: 16px; }
.smA { font-size: 11px; width: 12px; margin-left: 10px; }
.mini { position: absolute; right: -3px; top: 0; border-left: 2px solid transparent; border-right: 2px solid transparent; }
.mini.up { border-bottom: 3px solid #555; }
.mini.dn { border-top: 3px solid #555; }
.ic { display: inline-flex; align-items: center; justify-content: center; height: 23px; flex: none; box-sizing: border-box; }
.i24 { width: 24px; } .i22 { width: 22px; } .i16 { width: 16px; }
.cw { width: 10px; display: inline-flex; justify-content: center; flex: none; }
.fb { font: 700 13px "Liberation Serif", serif; color: #222; }
.fi { font: italic 700 13px "Liberation Serif", serif; color: #222; }
.fu { font: 700 13px "Liberation Serif", serif; color: #222; text-decoration: underline; }
.colorA { font: 700 15px "Liberation Serif", serif; color: #3f6fa8; }
.vsep { width: 1px; height: 22px; background: #d5dadf; flex: none; }
.m7 { margin: 0 7px; } .m6 { margin: 0 6px; } .m20 { margin: 0 0 0 20px; } .m4 { margin: 0 3px 0 7px; } .m5 { margin: 0 0 0 5px; }
.hot { background: linear-gradient(180deg, #fde7a0, #f9c74f); border: 1px solid #d9b04a; border-radius: 2px; }
.alabel { margin-left: 3px; color: #3d4a5c; font-size: 11px; }
.fdollar { font: 700 13px "Liberation Sans", sans-serif; color: #222; }
.fpct { font-size: 12px; color: #333; }
.fcomma { font-size: 15px; font-weight: 700; color: #333; padding-bottom: 6px; }
.fdec { font: 700 8px/8px "Liberation Sans", sans-serif; color: #333; display: block; text-align: center; padding-top: 3px; }
.bluearrow { color: #3a6bb0; font-weight: 700; }
.big { display: flex; flex-direction: column; align-items: center; padding-top: 6px; box-sizing: border-box; line-height: 14px; color: #3d4a5c; white-space: nowrap; flex: none; font-size: 10.8px; }
.big svg { margin-bottom: 6px; flex: none; }
.big span .caret { margin-left: 1px; }
.b76 { width: 76px; } .b42 { width: 42px; padding-left: 2px; } .b53 { width: 53px; margin-left: 2px; } .b54 { width: 54px; } .b36 { width: 36px; } .b44 { width: 44px; }
.editcol { width: 90px; padding: 1px 0 0 10px; box-sizing: border-box; display: flex; flex-direction: column; flex: none; }
.erow { height: 23.5px; display: flex; align-items: center; font-size: 11px; white-space: nowrap; }
.sigma { width: 19px; flex: none; font: 700 14px "Liberation Serif", serif; color: #222; padding-left: 3px; box-sizing: border-box; }
.eicon { width: 15px; margin-right: 4px; flex: none; }
.az { font: 700 15px "Liberation Serif", serif; }
.blue2 { fill: #3a6bb0; } .red2 { fill: #8c2a28; }
.ribline { height: 4px; flex: none; background: linear-gradient(180deg, #a7aeb5 0, #a7aeb5 1.5px, #d8dce0 2px, #eef0f2 100%); }

/* formula */
.fbar { height: 27px; flex: none; display: flex; background: #fff; }
.namebox { width: 150px; display: flex; align-items: center; justify-content: flex-end; padding-right: 6px; box-sizing: border-box; }
.pill { width: 112px; border-radius: 13px 0 0 13px; background: linear-gradient(180deg, #e0e4e8, #eef0f2); border: 1px solid #c4cad0; border-right: 0; box-sizing: border-box; display: flex; align-items: center; justify-content: space-between; padding: 0 9px 3px 8px; }
.eq { color: #aeb4ba; font-size: 11px; }
.fx { font: italic 700 13px "Liberation Serif", serif; color: #444; }
.finput { flex: 1; padding-left: 9px; color: #111; font-size: 13px; line-height: 24px; }
.fexp { width: 15px; margin: 1px 2px 1px 0; background: #dde1e5; border: 1px solid #b8bec4; box-sizing: border-box; display: flex; align-items: center; justify-content: center; }

/* sheet */
.sheetwrap { height: 460px; margin-top: 4px; flex: none; display: flex; box-shadow: 0 -3px 0 #dfe2e5, 0 -4px 0 #b4bac0; }
.grid { width: 1262px; height: 460px; flex: none; overflow: hidden; display: grid; grid-template-columns: 27px 104px 104px 127px 23px 78px 79px 78px 79px 79px 27px 68px 67px 68px 67px 68px 67px 68px; grid-template-rows: 28px 29px 27px 29px 27px 27px 27px 29px 29px 27px 28px 28px 27px 28px 27px 27px 27px; font-size: 13.2px; color: #1a1a1a; }
.corner { grid-column: 1; grid-row: 1; background: #e1e6ea; border-right: 1px solid #b9bfc5; border-bottom: 1px solid #b9bfc5; box-sizing: border-box; }
.ch { background: #e1e6ea; border-right: 1px solid #b9bfc5; border-bottom: 1px solid #b9bfc5; box-sizing: border-box; display: flex; align-items: center; justify-content: center; padding-left: 1px; color: #4a4f55; font-size: 12px; }
.ch.active { background: linear-gradient(180deg, #fde698, #f9c744); border-color: #c9a24a; color: #5b4a1e; }
.rh { background: #e1e6ea; border-right: 1px solid #b9bfc5; border-bottom: 1px solid #c4cacf; box-sizing: border-box; display: flex; align-items: center; justify-content: center; color: #4a4f55; font-size: 12.5px; }
.rh.active { background: linear-gradient(180deg, #fde698, #f9c744); }
.g { border-right: 1px solid #dedede; border-bottom: 1px solid #dedede; box-sizing: border-box; }
.cell { display: flex; align-items: center; box-sizing: border-box; white-space: nowrap; overflow: hidden; padding-bottom: 2px; }
.orange { background: #fbd5b0; }
.teal { background: #4bacc6; }
.sky { background: #92cddc; }
.black { background: #000; color: #fff; }
.title { font-weight: 700; font-size: 15px; color: #111; padding-bottom: 2px; }
.title.up { padding-bottom: 4px; }
.black.title { color: #fff; font-size: 15px; }
.hdr { justify-content: center; color: #eee; font-size: 12.5px; font-weight: 400; padding-bottom: 1px; }
.hdr.small { font-size: 12px; padding-bottom: 0; }
.center { justify-content: center; }
.left { padding-left: 2px; }
.pad68 { padding-left: 68px; } .pad18 { padding-left: 18px; } .pad59 { padding-left: 59px; }
.right { justify-content: flex-end; padding-right: 2px; }
.box { border: 1px solid #000; margin: -1px 0 0 -1px; background: #fff; }
.box.left { padding-left: 1px; }
.box.right { padding-right: 1px; }
.money { justify-content: space-between; padding-left: 8px; padding-right: 7px; }
.red { color: #b4413c; font-size: 11.5px; }
.raised { padding-bottom: 4px; font-size: 12.5px; }
.err { position: relative; }
.err::before { content: ""; position: absolute; left: 0; top: 0; border-top: 5px solid #2f8a3c; border-right: 5px solid transparent; }
.comment { position: relative; }
.comment::after { content: ""; position: absolute; right: 0; top: 0; border-top: 5px solid #c8202c; border-left: 5px solid transparent; }
.opshdr { justify-content: center; font-weight: 700; font-size: 11.5px; color: #222; padding-bottom: 1px; }
.marching { border: 2px dashed #111; margin: -1px 0 0 0; }
.selected { position: relative; z-index: 2; background: #ffff00; border: 3px solid #12125e; margin: -1px -1px 0 -1px; overflow: visible; padding-right: 0; }
.selected::after { content: ""; position: absolute; right: -5px; bottom: -5px; background: #12125e; border: 1px solid #fff; box-sizing: content-box; width: 4px; height: 4px; }

.vscroll { width: 18px; background: #e8ecef; display: flex; flex-direction: column; align-items: center; border-left: 1px solid #c6ccd1; box-sizing: border-box; }
.vsplit { width: 13px; height: 5px; margin-top: 2px; background: #eef1f3; border: 1px solid #a9b0b6; box-sizing: border-box; }
.arrow { width: 0; height: 0; border-left: 4px solid transparent; border-right: 4px solid transparent; margin: 3px 0; flex: none; }
.arrow.up { border-bottom: 5px solid #4a4f55; }
.arrow.down { border-top: 5px solid #4a4f55; margin-bottom: 4px; }
.vtrack { flex: 1; width: 100%; padding: 2px 1px 0; box-sizing: border-box; }
.vthumb { height: 246px; background: linear-gradient(90deg, #fafbfc, #e2e6ea); border: 1px solid #a9b0b6; border-radius: 2px; box-sizing: border-box; display: flex; align-items: center; justify-content: center; }
.grip { width: 7px; height: 6px; border-top: 1px solid #8c939a; border-bottom: 1px solid #8c939a; background: linear-gradient(180deg, transparent 40%, #8c939a 40%, #8c939a 60%, transparent 60%); }

/* sheet bar */
.sheetbar { height: 16px; flex: none; display: flex; align-items: center; background: linear-gradient(180deg, #e4e8eb, #d8dde1); position: relative; }
.nav { width: 59px; display: flex; gap: 7px; padding-left: 5px; box-sizing: border-box; align-items: center; }
.tri { width: 0; height: 0; border-top: 4px solid transparent; border-bottom: 4px solid transparent; flex: none; position: relative; }
.tri.l { border-right: 5px solid #4a4f55; }
.tri.r { border-left: 5px solid #4a4f55; }
.stabs { width: 699px; height: 16px; display: flex; flex: none; }
.st { height: 16px; display: flex; align-items: center; justify-content: center; font-size: 11px; color: #3d4a5c; box-sizing: border-box; clip-path: polygon(8px 0, 100% 0, calc(100% - 8px) 100%, 0 100%); flex: none; white-space: nowrap; }
.st.tblue { width: 91px; padding-right: 2px; background: linear-gradient(180deg, #c3d6ee, #8fb1de); color: #1b2e4a; clip-path: polygon(0 0, 100% 0, calc(100% - 8px) 100%, 0 100%); font-size: 10.5px; }
.st.yellow { width: 76px; margin-left: -4px; background: #ffff33; color: #222; font-size: 10.5px; }
.st.dark { width: 108px; margin-left: -4px; background: linear-gradient(180deg, #7c7f83, #5e6165); color: #e4e6e8; }
.st.plain { width: 112px; margin-left: 2px; color: #5a6672; box-shadow: inset 0 0 0 1px #c6ccd1; }
.st.plain + .st.plain { width: 92px; margin-left: -2px; }
.st.act { width: 134px; background: #fff; color: #222; font-weight: 700; margin-left: -4px; clip-path: none; border: 1px solid #b6bcc2; border-top: 0; font-size: 11.6px; }
.st.newt { width: 32px; clip-path: polygon(8px 0, 100% 0, calc(100% - 8px) 100%, 0 100%); background: #eef1f3; }
.hsplit { width: 6px; height: 13px; margin-left: 0; background: #eef1f3; border: 1px solid #a9b0b6; box-sizing: border-box; flex: none; }
.hl { margin-left: 7px; }
.htrack { width: 464px; flex: none; padding-left: 142px; padding-right: 6px; box-sizing: border-box; height: 16px; }
.hthumb { height: 15px; background: linear-gradient(180deg, #fafbfc, #dfe3e7); border: 1px solid #a9b0b6; border-radius: 2px; box-sizing: border-box; display: flex; align-items: center; justify-content: center; }
.hgrip { width: 7px; height: 6px; background: repeating-linear-gradient(90deg, #8c939a 0 1px, transparent 1px 2px); }
.hsplit.last { margin-left: 6px; }

/* status */
.status { height: 23px; flex: none; display: flex; align-items: center; justify-content: space-between; background: linear-gradient(180deg, #e0e4e7, #bfc5cb); border-top: 1px solid #a7aeb5; box-sizing: border-box; padding-left: 7px; }
.stxt { color: #4b5560; font-size: 10.5px; }
.sright { display: flex; align-items: center; padding-right: 4px; }
.vw { width: 20px; height: 18px; margin-right: 1px; display: flex; align-items: center; justify-content: center; }
.vw.on { height: 21px; background: linear-gradient(180deg, #fde79f, #f7c948); border: 1px solid #d8ae47; box-sizing: border-box; }
.pct { margin: 0 7px 0 10px; color: #4b5560; font-size: 11px; }
.zbtn { width: 17px; height: 17px; border-radius: 50%; border: 1px solid #9aa3ac; background: #f1f3f5; box-sizing: border-box; display: flex; align-items: center; justify-content: center; font-size: 14px; line-height: 1; font-weight: 700; color: #3d4a5c; }
.slider { width: 112px; height: 1px; background: #9aa3ac; position: relative; }
.sthumb { position: absolute; left: 50px; top: -7px; width: 10px; height: 14px; background: #f5f6f7; border: 1px solid #7e868e; border-radius: 1px 1px 4px 4px; box-sizing: border-box; }

/* taskbar */
.taskbar { height: 39px; flex: none; display: flex; align-items: stretch; background: #0c0c0c; color: #e6e6e6; }
.ti { display: flex; align-items: center; justify-content: center; flex: none; box-sizing: border-box; }
.t45 { width: 45px; } .t46 { width: 46px; }
.first { margin-left: 1px; }
.activeapp { background: #333; border-bottom: 2px solid #8fc4ef; }
.chrome { width: 22px; height: 22px; border-radius: 50%; background: conic-gradient(from -60deg, #e8453c 0 120deg, #f7c52b 120deg 240deg, #2fa84f 240deg 360deg); display: flex; align-items: center; justify-content: center; }
.chrome i { width: 11px; height: 11px; border-radius: 50%; background: #4a8ff0; border: 2px solid #fff; box-sizing: border-box; }
.tray { margin-left: auto; display: flex; align-items: center; font-size: 12px; color: #ddd; }
.lang { display: flex; flex-direction: column; align-items: center; line-height: 17px; margin-left: 7px; font-size: 11.5px; }
.clock { display: flex; flex-direction: column; align-items: center; line-height: 17px; margin-left: 8px; width: 60px; font-size: 11.5px; }
.showd { width: 1px; height: 39px; background: #444; margin-left: 3px; margin-right: 1px; }

/* menu */
.menu { position: absolute; left: 5px; top: 130px; width: 134px; height: 215px; box-sizing: border-box; background: #fff; border: 1px solid #c6ccd2; border-radius: 2px; box-shadow: 1px 1px 3px rgba(0,0,0,.25); font-size: 11px; color: #222; }
.mh { height: 18px; padding: 0 0 1px 6px; box-sizing: border-box; display: flex; align-items: center; font-weight: 700; background: #eef1f4; color: #3a4654; font-size: 11px; }
.irow { display: flex; gap: 11px; padding-left: 5px; margin-top: 6px; }
.irow.r2 { margin-top: 9px; }
.irow.r3 { margin-top: 6px; }
.irow.r4 { margin-top: 6px; }
.h2 { margin-top: 5px; }
.h3 { margin-top: 5px; }
.pi { width: 22px; height: 23px; flex: none; }
.pfx { font: italic 700 11px "Liberation Serif", serif; fill: #222; }
.pfx.s { font-size: 9px; }
.ppct { font: 700 10px "Liberation Sans", sans-serif; fill: #222; }
.ppct.s { font-size: 9px; fill: #1f4f99; }
.p123 { font: 700 9.5px "Liberation Serif", serif; fill: #222; }
.pspecial { position: absolute; left: 1px; right: 1px; top: 190px; height: 23px; display: flex; align-items: center; justify-content: center; padding: 0 0 2px 9px; box-sizing: border-box; background: linear-gradient(180deg, #fdf3b5, #f8e06d 60%, #fbeea0); border-radius: 2px; color: #333; font-size: 10.6px; box-shadow: inset 0 0 0 1px #efd97a; }

/* overlays */
.ghost { position: absolute; left: 37px; top: 38px; pointer-events: none; }
.wm { position: absolute; left: 1006px; top: 609px; pointer-events: none; color: rgba(110,110,110,.42); }
.wm1 { font-size: 17.7px; line-height: 23px; font-family: "Open Sans", sans-serif; }
.wm2 { font-size: 13.3px; line-height: 17px; margin-top: 1px; white-space: nowrap; }

.cursor { position: absolute; left: 49px; top: 347px; }
</style>
